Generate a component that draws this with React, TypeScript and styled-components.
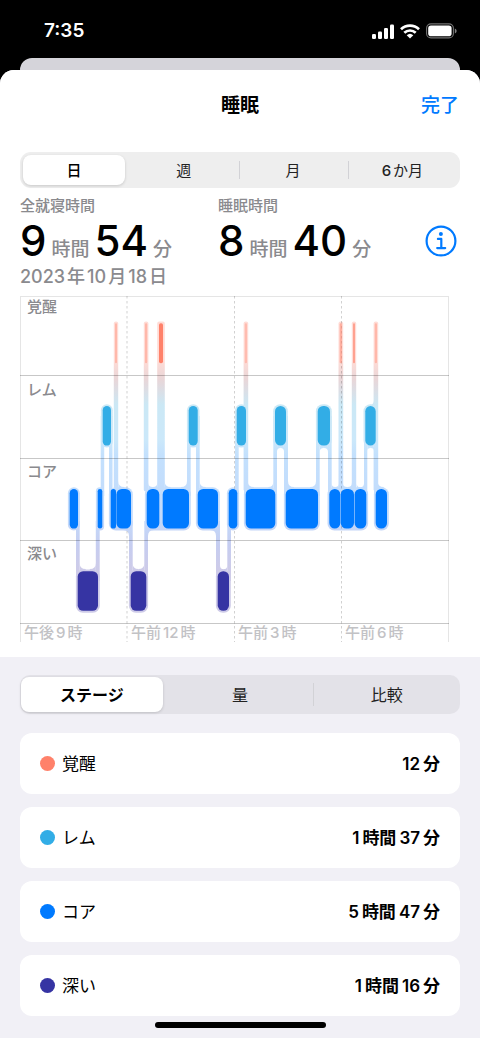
import React, { useState } from "react";
import styled, { createGlobalStyle } from "styled-components";

const GlobalStyle = createGlobalStyle`
  * { box-sizing: border-box; }
  body {
    margin: 0;
    background: #f1f0f6;
    font-family: Inter, "Noto Sans CJK JP", sans-serif;
    color: #000;
  }
  button { font-family: inherit; border: 0; padding: 0; background: none; cursor: pointer; }
`;

const AWAKE = "#ff816a";
const REM = "#32ade6";
const CORE = "#007aff";
const DEEP = "#3634a3";

const Screen = styled.div`
  background: #000;
`;

const StatusBar = styled.header`
  display: flex;
  align-items: center;
  justify-content: space-between;
  height: 58px;
  padding: 4px 23px 0 44px;
  color: #fff;
`;

const Clock = styled.time`
  font-size: 19px;
  line-height: 24px;
  font-weight: 600;
`;

const StatusIcons = styled.div`
  display: flex;
  align-items: center;
  gap: 6px;
`;

const BackSheet = styled.div`
  height: 12px;
  margin: 0 20px;
  border-radius: 12px 12px 0 0;
  background: #d5d4da;
`;

const Sheet = styled.main`
  background: #f1f0f6;
  border-radius: 14px 14px 0 0;
  overflow: hidden;
`;

const TitleBar = styled.div`
  display: grid;
  grid-template-columns: 1fr auto 1fr;
  align-items: center;
  height: 70px;
  padding: 2px 21px 0;
`;

const Title = styled.h1`
  grid-column: 2;
  margin: 0;
  font-size: 19px;
  line-height: 24px;
  font-weight: 600;
`;

const DoneButton = styled.button`
  justify-self: end;
  color: ${CORE};
  font-size: 19px;
  line-height: 24px;
  font-weight: 500;
`;

const Summary = styled.section`
  background: #fff;
  padding-bottom: 15px;
`;

const Content = styled.div`
  padding: 12px 20px 0;
`;

const Segments = styled.div<{ $tall?: boolean }>`
  display: flex;
  height: ${(p) => (p.$tall ? 39 : 36)}px;
  padding: ${(p) => (p.$tall ? "2px 0" : "3px 3px 3px 0")};
  border-radius: ${(p) => (p.$tall ? 10 : 11)}px;
  background: ${(p) => (p.$tall ? "#e3e2e8" : "#eeeeee")};
`;

const Segment = styled.button<{ $on: boolean; $line: boolean; $tall?: boolean }>`
  flex: 1;
  display: flex;
  align-items: center;
  justify-content: center;
  position: relative;
  margin: ${(p) => (p.$on ? (p.$tall ? "0 4px 0 1px" : "0 4px 0 3px") : "0")};
  padding-top: ${(p) => (p.$tall ? 0 : 2)}px;
  border-radius: 8px;
  color: ${(p) => (p.$on ? "#000" : "#222")};
  font-size: ${(p) => (p.$tall ? 16 : 15)}px;
  line-height: 20px;
  font-weight: ${(p) => (p.$on ? (p.$tall ? 700 : 500) : 400)};
  background: ${(p) => (p.$on ? "#fff" : "transparent")};
  box-shadow: ${(p) => (p.$on ? "0 1px 3px rgba(0, 0, 0, 0.16)" : "none")};
  flex-basis: ${(p) => (p.$on ? (p.$tall ? "-5px" : "-7px") : "0")};

  [data-digits] {
    font-weight: 500;
  }

  &::before {
    content: "";
    display: ${(p) => (p.$line ? "block" : "none")};
    position: absolute;
    left: 0;
    top: 6px;
    bottom: 6px;
    width: 1px;
    background: #d2d2d6;
  }
`;

const SegmentSlot = styled.div`
  flex: 1 1 0;
  display: flex;
`;

const Spaced = styled.span<{ $gap: number }>`
  display: inline-flex;
  align-items: baseline;
  gap: ${(p) => p.$gap}px;
  white-space: nowrap;
`;

const Stats = styled.div`
  display: grid;
  grid-template-columns: 9fr 11fr;
  padding-top: 7px;
`;

const StatCell = styled.div`
  display: flex;
  align-items: flex-end;
  justify-content: space-between;
`;

const StatLabel = styled.div`
  color: #8a8a8e;
  font-size: 15px;
  line-height: 22px;
  font-weight: 500;
`;

const StatValue = styled.div`
  display: flex;
  align-items: baseline;
  gap: 5px;
  height: 47px;
  line-height: 47px;
  white-space: nowrap;
`;

const Big = styled.span`
  font-size: 42px;
  font-weight: 500;
`;

const Unit = styled.span`
  color: #8a8a8e;
  font-size: 19px;
  font-weight: 500;
`;

const InfoButton = styled.button`
  display: flex;
  margin: 0 3px 7px 0;
`;

const DateLine = styled.div`
  color: #8a8a8e;
  font-size: 18px;
  line-height: 26px;
  font-weight: 500;
`;

const Chart = styled.svg`
  display: block;
  width: 100%;
  height: auto;
  margin-top: 6px;
`;

const Panel = styled.section`
  padding: 18px 20px 10px;
`;

const StageList = styled.ul`
  display: flex;
  flex-direction: column;
  gap: 13px;
  margin: 19px 0 0;
  padding: 0;
  list-style: none;
`;

const StageRow = styled.li`
  display: flex;
  align-items: center;
  height: 61px;
  padding: 0 20px;
  border-radius: 12px;
  background: #fff;
  font-size: 17px;
  line-height: 24px;
`;

const Dot = styled.span<{ $color: string }>`
  width: 15px;
  height: 15px;
  margin-right: 7px;
  border-radius: 50%;
  background: ${(p) => p.$color};
`;

const StageValue = styled.span`
  margin-left: auto;
  font-weight: 600;
`;

const HomeIndicator = styled.div`
  width: 171px;
  height: 6px;
  margin: 6px auto 0;
  border-radius: 3px;
  background: #000;
`;

/* Splits a label into runs of digits and of Japanese text, with a small gap between them. */
function Mixed({ text, gap = 2 }: { text: string; gap?: number }) {
  const runs = text.match(/\d+|\D+/g) || [];
  return (
    <Spaced $gap={gap}>
      {runs.map((run, i) => (
        <span key={i} data-digits={/\d/.test(run) ? "" : undefined}>{run}</span>
      ))}
    </Spaced>
  );
}

type Span = [number, number];

const coreSpans: Span[] = [
  [49.7, 58], [77.7, 82.3], [90.7, 96], [96.4, 111], [126.7, 139.3], [142.7, 169], [177.7, 198],
  [208.7, 217.3], [225.7, 255.3], [265.7, 298], [309.3, 320.3], [320.8, 334], [334.6, 346.3], [355.7, 367],
];
const remSpans: Span[] = [[82.7, 91], [168.7, 177.7], [216.7, 226], [255, 266], [297.7, 310], [345.3, 355.7]];
const deepSpans: Span[] = [[57.7, 78], [110.7, 126.3], [197.7, 209]];
const awakeSpans: [number, number, number][] = [
  [95, 97, 0.4], [125, 127.2, 0.4], [139, 143, 1], [224.8, 227, 0.35], [319.7, 322, 0.5], [333, 335, 0.65], [354.8, 357, 0.4],
];

/* Core blocks that touch share one outline. */
const coreGroups: Span[] = [
  [49.7, 58], [77.7, 82.3], [90.7, 111], [126.7, 169], [177.7, 198], [208.7, 217.3],
  [225.7, 255.3], [265.7, 298], [309.3, 346.3], [355.7, 367],
];

/* Links between stages: left, right, top, bottom. */
const links: [number, number, number, number][] = [
  [80.7, 84.2, 120, 200], [89, 92.5, 120, 200], [167, 170.7, 120, 200], [176, 179.7, 120, 200],
  [215, 218.7, 120, 200], [224.2, 227.8, 120, 200], [253.3, 257, 120, 200], [264, 268, 120, 200],
  [296, 299.7, 120, 200], [308, 311.7, 120, 200], [344, 347.3, 120, 200], [354, 357.7, 120, 200],
  [56, 59.7, 225, 285], [75.8, 79.7, 225, 285], [109, 112.7, 225, 285], [124.3, 128, 225, 285],
  [196, 200, 225, 285], [207.3, 211, 225, 285],
];

/* Rounded inner corners: x, y, horizontal and vertical direction, radius. */
const fillets: [number, number, number, number, number][] = [
  [98.3, 191, 1, -1, 6], [128.3, 191, 1, -1, 4.5], [137.3, 191, -1, -1, 4.5], [144.7, 191, 1, -1, 6],
  [167, 191, -1, -1, 6], [179.7, 191, 1, -1, 6], [227.8, 191, 1, -1, 6], [253.3, 191, -1, -1, 5],
  [268, 191, 1, -1, 6], [296, 191, -1, -1, 6], [311.7, 191, 1, -1, 3.5], [318.7, 191, -1, -1, 3.5],
  [322.7, 191, 1, -1, 4.5], [332, 191, -1, -1, 4.5], [336.7, 191, 1, -1, 3.6], [344, 191, -1, -1, 3.6],
  [357.7, 191, 1, -1, 6], [109, 234, -1, 1, 6], [128, 234, 1, 1, 6], [196, 234, -1, 1, 6],
  [59.7, 273, 1, -1, 6], [75.8, 273, -1, -1, 6], [112.7, 273, 1, -1, 5.8], [124.3, 273, -1, -1, 5.8],
  [200, 273, 1, -1, 3.6], [207.3, 273, -1, -1, 3.6],
  [257, 152, 1, 1, 3.5], [264, 152, -1, 1, 3.5], [299.7, 152, 1, 1, 4.1], [308, 152, -1, 1, 4.1],
  [347.3, 152, 1, 1, 3.3], [354, 152, -1, 1, 3.3], [354, 109, -1, -1, 5],
];

const stageLabels: [string, number][] = [["覚醒", 16], ["レム", 99], ["コア", 181], ["深い", 263]];
const hourLabels: [string, string, string, number][] = [
  ["午後", "9", "時", 4], ["午前", "12", "時", 111], ["午前", "3", "時", 218], ["午前", "6", "時", 325],
];

function Halo({ spans, top }: { spans: Span[]; top: number }) {
  return (
    <>
      {spans.map(([a, b]) => (
        <rect key={a} x={a - 1.8} y={top - 1.8} width={b - a + 3.6} height={43.4} rx={Math.min((b - a + 3.6) / 2, 7)} />
      ))}
    </>
  );
}

function Bars({ spans, top, color }: { spans: Span[]; top: number; color: string }) {
  return (
    <g fill={color}>
      {spans.map(([a, b]) => (
        <rect key={a} x={a} y={top} width={b - a} height={39.6} rx={Math.min((b - a) / 2, 5.5)} />
      ))}
    </g>
  );
}

function SleepChart() {
  return (
    <Chart viewBox="0 0 440 346" role="img" aria-label="睡眠">
      <defs>
        <linearGradient id="stages" gradientUnits="userSpaceOnUse" x1="0" y1="0" x2="0" y2="320">
          <stop offset="0.2" stopColor="#ffdcd6" />
          <stop offset="0.26" stopColor="#e9d6d8" />
          <stop offset="0.34" stopColor="#cbe8f5" />
          <stop offset="0.45" stopColor="#cbe8fa" />
          <stop offset="0.5" stopColor="#c3e0fd" />
          <stop offset="0.7" stopColor="#c3dafb" />
          <stop offset="0.78" stopColor="#c6cdf0" />
          <stop offset="0.86" stopColor="#cecbe8" />
        </linearGradient>
      </defs>

      <g fill="url(#stages)">
        {awakeSpans.map(([a, b]) => {
          const edge = b - a > 3 ? 1.8 : 1.2;
          return <rect key={a} x={a - edge} y={25.5} width={b - a + 2 * edge} height={170} rx={2} />;
        })}
        <Halo spans={remSpans} top={110} />
        <Halo spans={coreGroups} top={193} />
        <Halo spans={deepSpans} top={275.2} />
        {links.map(([l, r, t, b]) => (
          <rect key={l} x={l} y={t} width={r - l} height={b - t} />
        ))}
        {fillets.map(([x, y, dx, dy, r], i) => (
          <path key={i} d={`M${x - dx} ${y - dy}H${x}V${y + dy * r}Q${x} ${y} ${x + dx * r} ${y}V${y - dy}Z`} />
        ))}
      </g>

      <g fill="none" stroke="#000" shapeRendering="crispEdges">
        <path strokeOpacity="0.1" d="M0.5 346V0.5H428.5V346" />
        <path strokeOpacity="0.22" d="M0 79.5H429M0 162.5H429M0 244.5H429M0 327.5H429" />
      </g>
      <path fill="none" stroke="#000" strokeOpacity="0.18" strokeDasharray="2.5 2.5" d="M107 0V346M214.5 0V346M321.5 0V346" />

      <g fill={AWAKE}>
        {awakeSpans.map(([a, b, o]) => (
          <rect key={a} x={a} y={27.3} width={b - a} height={40} rx={Math.min((b - a) / 2, 1.8)} opacity={o} />
        ))}
      </g>
      <Bars spans={remSpans} top={110} color={REM} />
      <Bars spans={coreSpans} top={193} color={CORE} />
      <Bars spans={deepSpans} top={275.2} color={DEEP} />

      <g fontSize="15" fontWeight="500" fill="#8a8a8e">
        {stageLabels.map(([label, y]) => (
          <text key={label} x={7} y={y}>{label}</text>
        ))}
      </g>
      <g fontSize="15" fontWeight="500" fill="#c2c2c5">
        {hourLabels.map(([half, hour, unit, x]) => (
          <text key={x} x={x} y={342}>
            {half}
            <tspan dx="2">{hour}</tspan>
            <tspan dx="2">{unit}</tspan>
          </text>
        ))}
      </g>
    </Chart>
  );
}

function SegmentedControl({ items, label, tall }: { items: string[]; label: string; tall?: boolean }) {
  const [active, setActive] = useState(0);
  return (
    <Segments role="group" aria-label={label} $tall={tall}>
      {items.map((item, i) => (
        <SegmentSlot key={item}>
          <Segment
            type="button"
            aria-pressed={i === active}
            $on={i === active}
            $line={i > 0 && i !== active && i - 1 !== active}
            $tall={tall}
            onClick={() => setActive(i)}
          >
            <Mixed text={item} />
          </Segment>
        </SegmentSlot>
      ))}
    </Segments>
  );
}

function Duration({ hours, minutes }: { hours: number; minutes: number }) {
  return (
    <StatValue>
      <Big>{hours}</Big>
      <Unit>時間</Unit>
      <Big>{minutes}</Big>
      <Unit>分</Unit>
    </StatValue>
  );
}

const stages = [
  { name: "覚醒", value: "12分", color: AWAKE },
  { name: "レム", value: "1時間37分", color: REM },
  { name: "コア", value: "5時間47分", color: CORE },
  { name: "深い", value: "1時間16分", color: DEEP },
];

export default function App() {
  return (
    <Screen>
      <GlobalStyle />
      <StatusBar>
        <Clock>7:35</Clock>
        <StatusIcons aria-hidden="true">
          <svg width="22" height="15" viewBox="0 0 22 15" fill="#fff">
            <rect x="0" y="10" width="4" height="5" rx="1.2" />
            <rect x="6" y="7.5" width="4" height="7.5" rx="1.2" />
            <rect x="12" y="4" width="4" height="11" rx="1.2" />
            <rect x="18" y="0.5" width="4" height="14.5" rx="1.2" />
          </svg>
          <svg width="20" height="15" viewBox="0 0 20 15">
            <g fill="none" stroke="#fff" strokeWidth="2.7">
              <path d="M1 5.2A13 13 0 0 1 19 5.2" />
              <path d="M4.3 8.8A8.2 8.2 0 0 1 15.7 8.8" />
            </g>
            <path d="M10 14.6L6.7 11.3A4.8 4.8 0 0 1 13.3 11.3Z" fill="#fff" />
          </svg>
          <svg width="31" height="16" viewBox="0 0 31 16">
            <rect x="0.6" y="0.9" width="26.8" height="14" rx="4.4" fill="none" stroke="#fff" strokeOpacity="0.45" strokeWidth="1.1" />
            <rect x="2.2" y="2.6" width="23.4" height="10.6" rx="2.8" fill="#fff" />
            <path d="M28.8 5.4C30 6 30.6 6.9 30.6 7.9S30 9.8 28.8 10.4Z" fill="#fff" fillOpacity="0.5" />
          </svg>
        </StatusIcons>
      </StatusBar>
      <BackSheet />
      <Sheet>
        <Summary>
          <TitleBar>
            <Title>睡眠</Title>
            <DoneButton type="button">完了</DoneButton>
          </TitleBar>
          <Content>
            <SegmentedControl label="期間" items={["日", "週", "月", "6か月"]} />
            <Stats>
              <StatCell>
                <div>
                  <StatLabel>全就寝時間</StatLabel>
                  <Duration hours={9} minutes={54} />
                </div>
              </StatCell>
              <StatCell>
                <div>
                  <StatLabel>睡眠時間</StatLabel>
                  <Duration hours={8} minutes={40} />
                </div>
                <InfoButton type="button" aria-label="情報">
                  <svg width="32" height="32" viewBox="0 0 32 32" fill="none" stroke={CORE}>
                    <circle cx="16" cy="16" r="14.4" strokeWidth="2.2" />
                    <path d="M12.9 13.9H16.3V23M12.2 23.1H20.2" strokeWidth="2.2" strokeLinecap="round" strokeLinejoin="round" />
                    <circle cx="15.9" cy="9" r="2" fill={CORE} stroke="none" />
                  </svg>
                </InfoButton>
              </StatCell>
            </Stats>
            <DateLine>
              <Mixed text="2023年10月18日" />
            </DateLine>
            <SleepChart />
          </Content>
        </Summary>
        <Panel>
          <SegmentedControl tall label="表示" items={["ステージ", "量", "比較"]} />
          <StageList>
            {stages.map((s) => (
              <StageRow key={s.name}>
                <Dot $color={s.color} />
                <span>{s.name}</span>
                <StageValue>
                  <Mixed text={s.value} gap={3} />
                </StageValue>
              </StageRow>
            ))}
          </StageList>
          <HomeIndicator />
        </Panel>
      </Sheet>
    </Screen>
  );
}
